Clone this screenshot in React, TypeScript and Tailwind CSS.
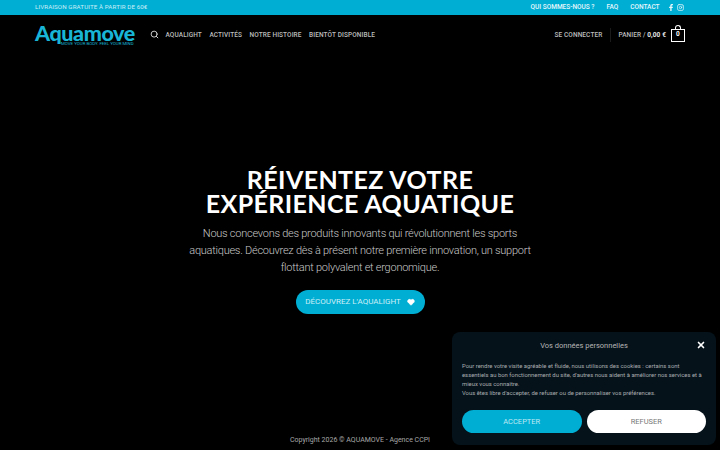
import { Search, Instagram, Heart, X } from "lucide-react";

const nav = ["AQUALIGHT", "ACTIVITÉS", "NOTRE HISTOIRE", "BIENTÔT DISPONIBLE"];

export default function App() {
  return (
    <div className="relative flex h-[450px] w-[720px] flex-col overflow-hidden bg-black font-['Roboto',sans-serif]">
      <div className="flex h-[15px] items-center justify-between bg-[#00aed4] pl-[35px] pr-[36px] text-[6.5px] text-[#cdeef6]">
        <span className="text-[6.2px] tracking-[0.1px]">LIVRAISON GRATUITE À PARTIR DE 60€</span>
        <div className="flex items-center font-medium text-[#e6f7fb]">
          <span>QUI SOMMES-NOUS ?</span>
          <span className="ml-[12px]">FAQ</span>
          <span className="ml-[12px]">CONTACT</span>
          <svg className="ml-[9px] h-[7px] w-[4px]" viewBox="0 0 8 14" fill="#e6f7fb">
            <path d="M5.2 14V8h2.2l.4-2.6H5.2V3.900c0-.8.3-1.300 1.300-1.300h1.400V.2C7.600.1 6.800 0 5.900 0 3.900 0 2.500 1.200 2.500 3.500v1.900H.2V8h2.300v6z" />
          </svg>
          <Instagram className="ml-[4.500px] h-[7px] w-[7px]" strokeWidth={2.4} />
        </div>
      </div>

      <header className="flex h-[40px] items-center pl-[35px] pr-[35px]">
        <div className="flex w-[100px] flex-col items-start">
          <span className="h-[17px] font-['Lato',sans-serif] text-[21.500px] leading-[17px] font-black tracking-[-0.4px] text-[#19b5d6]">Aquamove</span>
          <span className="ml-[26px] text-[4.400px] leading-[4px] whitespace-nowrap text-[#19b5d6]">MOVE YOUR BODY. FEEL YOUR MIND</span>
        </div>
        <Search className="ml-[15px] mb-[1px] h-[9px] w-[9px] text-[#d6d6d6]" strokeWidth={2.5} />
        <nav className="ml-[6.500px] flex gap-[7.500px] pt-[1px] text-[6.500px] font-medium tracking-[0.1px] whitespace-nowrap text-[#bdbdbd]">
          {nav.map((n) => (
            <span key={n}>{n}</span>
          ))}
        </nav>
        <div className="ml-auto flex items-center text-[6.500px] font-medium tracking-[0.1px] whitespace-nowrap text-[#bdbdbd]">
          <span className="pt-[1px]">SE CONNECTER</span>
          <span className="mx-[7.500px] h-[14px] w-px bg-[#1a1a1a]" />
          <span className="pt-[1px]">PANIER / <b className="font-bold text-[#e5e5e5]">0,00 €</b></span>
          <div className="relative ml-[5px] flex h-[13px] w-[14px] items-center justify-center border-[1.5px] border-white text-[6.5px] font-bold text-white">
            0
            <span className="absolute top-[-5px] left-[2.5px] h-[4px] w-[6px] rounded-t-full border-[1px] border-b-0 border-white" />
          </div>
        </div>
      </header>

      <main className="flex flex-col items-center pt-[112px] text-center">
        <h1 className="font-['Lato',sans-serif] text-[25px] leading-[24px] font-bold tracking-[0.4px] text-white">
          RÉIVENTEZ VOTRE<br />EXPÉRIENCE AQUATIQUE
        </h1>
        <p className="mt-[10px] w-[350px] text-[11px] leading-[17px] font-light tracking-[-0.25px] text-[#c9c9c9]">
          Nous concevons des produits innovants qui révolutionnent les sports aquatiques. Découvrez dès à présent notre première innovation, un support flottant polyvalent et ergonomique.
        </p>
        <button className="mt-[14px] flex h-[24px] w-[129px] items-center justify-center gap-[6px] rounded-full bg-[#00aed4] text-[8px] text-[#cdeef6]">
          DÉCOUVREZ L'AQUALIGHT
          <Heart className="h-[8px] w-[8px] fill-white text-white" />
        </button>
      </main>

      <footer className="mt-auto pb-[5px] text-center text-[7px] leading-[10px] text-[#a8a8a8]">
        Copyright 2026 © AQUAMOVE - Agence CCPI
      </footer>

      <div className="absolute top-[332px] left-[452px] h-[113px] w-[264px] rounded-[8px] bg-[#05121a] px-[10px] pt-[7px]">
        <div className="relative pt-[1px] text-center text-[7.500px] leading-[12px] text-[#b5b5b5]">
          Vos données personnelles
          <X className="absolute top-[1px] right-[0px] h-[10px] w-[10px] text-white" strokeWidth={4} />
        </div>
        <p className="mt-[10px] text-[5.900px] leading-[9px] text-[#a9adb0]">
          Pour rendre votre visite agréable et fluide, nous utilisons des cookies : certains sont essentiels au bon fonctionnement du site, d'autres nous aident à améliorer nos services et à mieux vous connaître.<br />
          Vous êtes libre d'accepter, de refuser ou de personnaliser vos préférences.
        </p>
        <div className="mt-[12px] flex gap-[5px]">
          <button className="h-[23px] flex-1 rounded-full bg-[#00aed4] text-[7.500px] text-[#bfe9f3]">ACCEPTER</button>
          <button className="h-[23px] flex-1 rounded-full bg-white text-[7.500px] text-[#777]">REFUSER</button>
        </div>
      </div>
    </div>
  );
}
